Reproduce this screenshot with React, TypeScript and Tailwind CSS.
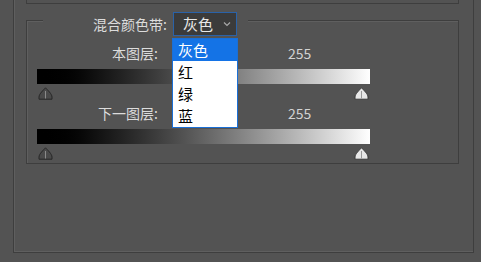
import React from 'react';

const font = { fontFamily: '"Noto Sans CJK SC", "Noto Sans", sans-serif' };

function Handle({ light }: { light?: boolean }) {
  return (
    <svg width="15" height="13" viewBox="0 0 15 13">
      <path
        d="M7.5 0.8 C9.5 3, 14 7, 14 10 L14 12.2 L1 12.2 L1 10 C1 7, 5.5 3, 7.5 0.8 Z"
        fill={light ? '#e8e8e8' : '#4a4a4a'}
        stroke={light ? '#3a3a3a' : '#262626'}
        strokeWidth="1"
      />
      <line x1="7.5" y1="4" x2="7.5" y2="11.5" stroke={light ? '#9a9a9a' : '#8a8a8a'} strokeWidth="1" />
    </svg>
  );
}

function Channel({ label }: { label: string }) {
  return (
    <>
      <div className="flex items-center h-[20px] text-[14px] text-[#dcdcdc]">
        <span className="w-[131px] text-right">{label}</span>
        <span className="ml-[130px] text-[#d2d2d2]">255</span>
      </div>
      <div className="ml-[10px] mt-[6px] w-[333px] h-[15px] bg-gradient-to-r from-black to-white" />
      <div className="ml-[11px] mt-[3px] w-[331px] h-[13px] flex justify-between">
        <Handle />
        <Handle light />
      </div>
    </>
  );
}

export default function App() {
  return (
    <div className="w-[481px] h-[262px] bg-[#535353] overflow-hidden" style={font}>
      <div className="ml-[13px] w-[461px] h-[253px] border-x border-b border-[#3e3e3e] shadow-[inset_1px_-1px_0_#5f5f5f]">
        <div className="ml-[12px] w-[433px] h-[4px] border-x border-b border-[#3e3e3e]" />
        <div className="ml-[12px] mt-[16px] w-[433px] h-[144px] border border-[#3e3e3e] shadow-[inset_1px_1px_0_#5f5f5f]">
          {/* header over the top border */}
          <div className="-mt-[9px] ml-[16px] w-[205px] h-[24px] bg-[#535353] flex items-center justify-end gap-[6px] pr-[11px]">
            <span className="text-[14px] text-[#dcdcdc]">混合颜色带:</span>
            <div className="relative">
              <div className="w-[64px] h-[24px] bg-[#3b3b3b] border border-[#2a62a8] flex items-center justify-between pl-[9px] pr-[5px] text-[15px] text-[#e8e8e8]">
                <span>灰色</span>
                <svg width="8" height="6" viewBox="0 0 8 6">
                  <polyline points="1,1.5 4,4.5 7,1.5" fill="none" stroke="#a8a8a8" strokeWidth="1.2" />
                </svg>
              </div>
              <div className="absolute left-[-1px] top-[26px] w-[66px] bg-white border border-[#1a6fd6] text-[15px] text-black z-10">
                <div className="h-[22px] flex items-center pl-[5px] bg-[#1473e6] text-white">灰色</div>
                <div className="h-[22px] flex items-center pl-[5px]">红</div>
                <div className="h-[22px] flex items-center pl-[5px]">绿</div>
                <div className="h-[22px] flex items-center pl-[5px]">蓝</div>
              </div>
            </div>
          </div>
          <div className="mt-[7px]">
            <Channel label="本图层:" />
          </div>
          <div className="mt-[3px]">
            <Channel label="下一图层:" />
          </div>
        </div>
      </div>
    </div>
  );
}
